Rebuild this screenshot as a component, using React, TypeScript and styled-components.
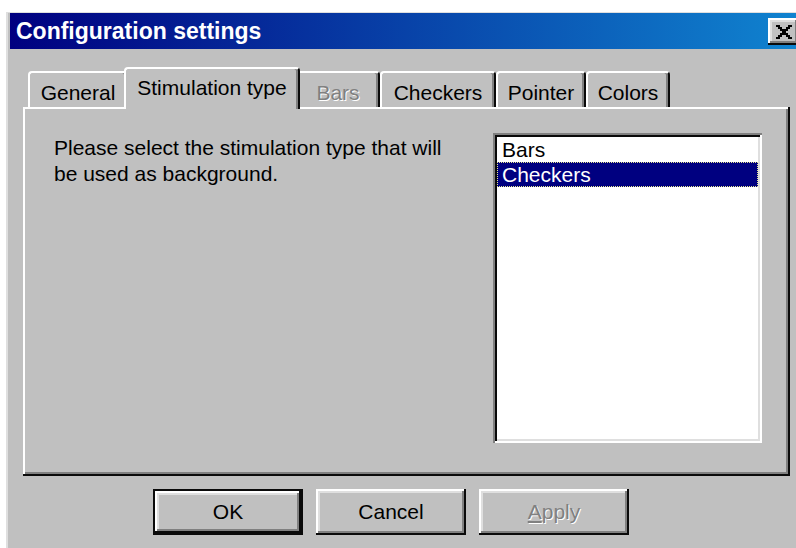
import styled, { createGlobalStyle } from "styled-components";

const GlobalStyle = createGlobalStyle`
  html, body {
    margin: 0;
    background: #ffffff;
    overflow: hidden;
  }
  body {
    font-family: "Liberation Sans", Arial, sans-serif;
  }
`;

type TabInfo = { label: string; width: number; active?: boolean; disabled?: boolean };

const tabs: TabInfo[] = [
  { label: "General", width: 100 },
  { label: "Stimulation type", width: 176, active: true },
  { label: "Bars", width: 84, disabled: true },
  { label: "Checkers", width: 116 },
  { label: "Pointer", width: 90 },
  { label: "Colors", width: 84 },
];

// win98 close glyph, one string per pixel row (drawn at 2x)
const closeGlyph = [
  "XX....XX",
  ".XX..XX.",
  "..XXXX..",
  "...XX...",
  "..XXXX..",
  ".XX..XX.",
  "XX....XX",
];

const CloseIcon = () => (
  <svg width="16" height="14" viewBox="0 0 16 14">
    {closeGlyph.map((row, y) =>
      row.split("").map((c, x) =>
        c === "X" ? <rect key={`${x}-${y}`} x={x * 2} y={y * 2} width="2" height="2" fill="#000" /> : null
      )
    )}
  </svg>
);

const App = () => {
  return (
    <>
      <GlobalStyle />
      <Dialog>
        <TitleBar>
          <Title>Configuration settings</Title>
          <CloseButton>
            <CloseIcon />
          </CloseButton>
        </TitleBar>

        <Body>
          <TabStrip>
            {tabs.map((t) => (
              <Tab key={t.label} $width={t.width} $active={t.active} $disabled={t.disabled}>
                {t.label}
              </Tab>
            ))}
          </TabStrip>

          <Panel>
            <Description>
              Please select the stimulation type that will be used as background.
            </Description>
            <ListBox>
              <ListItem>Bars</ListItem>
              <ListItem $selected>Checkers</ListItem>
            </ListBox>
          </Panel>

          <ButtonRow>
            <Button $default>OK</Button>
            <Button>Cancel</Button>
            <Button $disabled>
              <u>A</u>pply
            </Button>
          </ButtonRow>
        </Body>
      </Dialog>
    </>
  );
};

export default App;

const Dialog = styled.div`
  box-sizing: border-box;
  width: 796px;
  height: 536px;
  margin: 12px 0 0 6px;
  padding: 0 0 0 2px;
  background: #c0c0c0;
  border-top: 1px solid #dfdfdf;
  border-left: 2px solid #dfdfdf;
  display: flex;
  flex-direction: column;
`;

const TitleBar = styled.div`
  box-sizing: border-box;
  height: 36px;
  padding: 0 3px 0 6px;
  display: flex;
  align-items: center;
  justify-content: space-between;
  background: linear-gradient(90deg, #000080 0%, #1084d0 100%);
`;

const Title = styled.span`
  color: #ffffff;
  font-weight: bold;
  font-size: 23px;
  line-height: 36px;
  white-space: nowrap;
`;

const CloseButton = styled.div`
  width: 31px;
  height: 27px;
  margin-top: 1px;
  background: #c0c0c0;
  display: flex;
  align-items: center;
  justify-content: center;
  box-shadow: inset -2px -2px #0a0a0a, inset 2px 2px #ffffff, inset -4px -4px #808080,
    inset 4px 4px #dfdfdf;
`;

const Body = styled.div`
  flex: 1;
  padding: 18px 12px 0 13px;
  display: flex;
  flex-direction: column;
`;

const TabStrip = styled.div`
  position: relative;
  z-index: 1;
  height: 40px;
  padding-left: 5px;
  display: flex;
  align-items: flex-start;
`;

const Tab = styled.div<{ $width: number; $active?: boolean; $disabled?: boolean }>`
  box-sizing: border-box;
  flex: none;
  width: ${(p) => p.$width}px;
  height: ${(p) => (p.$active ? 42 : 36)}px;
  margin: ${(p) => (p.$active ? "0 -4px" : "4px 0 0")};
  padding-top: ${(p) => (p.$active ? 7 : 8)}px;
  position: relative;
  z-index: ${(p) => (p.$active ? 2 : 1)};
  background: #c0c0c0;
  border-top: 2px solid #ffffff;
  border-left: 2px solid #ffffff;
  border-right: 2px solid #0a0a0a;
  border-radius: 4px 4px 0 0;
  box-shadow: inset -2px 0 #808080;
  text-align: center;
  font-size: 21px;
  line-height: 24px;
  white-space: nowrap;
  color: ${(p) => (p.$disabled ? "#808080" : "#000000")};
  text-shadow: ${(p) => (p.$disabled ? "1px 1px 0 #ffffff" : "none")};
`;

const Panel = styled.div`
  box-sizing: border-box;
  height: 369px;
  padding: 26px 28px 0 31px;
  display: flex;
  align-items: flex-start;
  background: #c0c0c0;
  box-shadow: inset -2px -2px #0a0a0a, inset 2px 2px #ffffff, inset -4px -4px #808080;
`;

const Description = styled.p`
  flex: 1;
  margin: 2px 0 0;
  max-width: 400px;
  font-size: 21px;
  line-height: 26px;
  color: #000000;
`;

const ListBox = styled.div`
  box-sizing: border-box;
  width: 269px;
  height: 310px;
  margin-left: auto;
  padding: 4px;
  background: #ffffff;
  box-shadow: inset 2px 2px #808080, inset -2px -2px #ffffff, inset 4px 4px #0a0a0a,
    inset -4px -4px #dfdfdf;
`;

const ListItem = styled.div<{ $selected?: boolean }>`
  height: 25px;
  padding-left: 5px;
  font-size: 21px;
  line-height: 25px;
  color: ${(p) => (p.$selected ? "#ffffff" : "#000000")};
  background: ${(p) => (p.$selected ? "#000080" : "transparent")};
  outline: ${(p) => (p.$selected ? "1px dotted #e8e890" : "none")};
  outline-offset: -1px;
`;

const ButtonRow = styled.div`
  margin-top: 13px;
  padding-left: 130px;
  display: flex;
  gap: 13px;
`;

const Button = styled.div<{ $default?: boolean; $disabled?: boolean }>`
  box-sizing: border-box;
  width: 150px;
  height: 46px;
  display: flex;
  align-items: center;
  justify-content: center;
  background: #c0c0c0;
  border: ${(p) => (p.$default ? "2px solid #0a0a0a" : "none")};
  box-shadow: inset -2px -2px #0a0a0a, inset 2px 2px #ffffff, inset -4px -4px #808080,
    inset 4px 4px #dfdfdf;
  font-size: 21px;
  color: ${(p) => (p.$disabled ? "#808080" : "#000000")};
  text-shadow: ${(p) => (p.$disabled ? "1px 1px 0 #ffffff" : "none")};
`;
